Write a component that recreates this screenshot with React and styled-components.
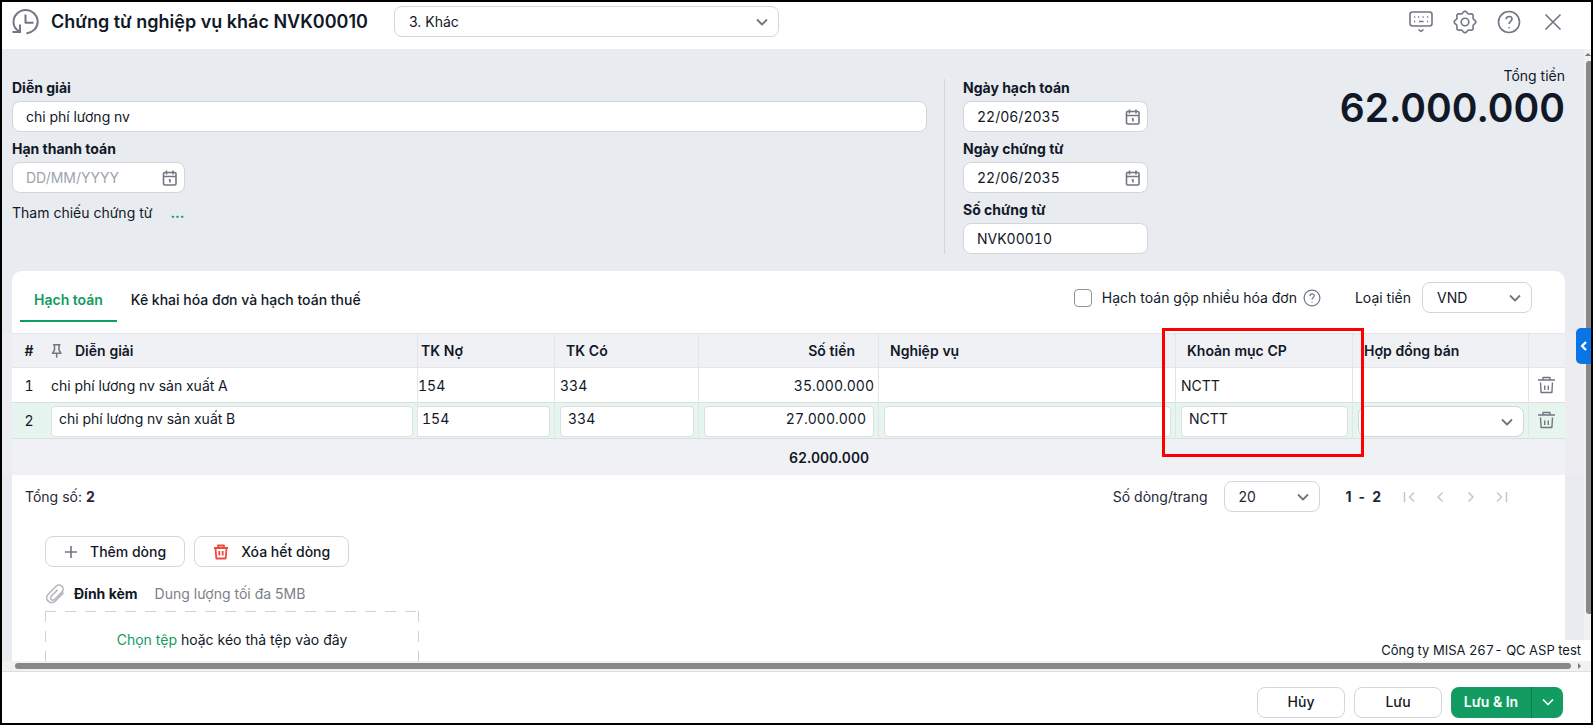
import React, { useState } from 'react';
import styled, { createGlobalStyle } from 'styled-components';

const rows = [
  { id: 1, note: 'chi phí lương nv sản xuất A', debit: '154', credit: '334', amount: '35.000.000', item: 'NCTT' },
  { id: 2, note: 'chi phí lương nv sản xuất B', debit: '154', credit: '334', amount: '27.000.000', item: 'NCTT' },
];

//_______________________ Icons ______________________________

const HistoryIcon = () => (
  <Icon width="28" height="28" viewBox="0 0 28 28" $stroke={2}>
    <path d="M8 16.5V24M0.500 24H9" />
    <path d="M7.500 23.600C3.600 21.400 1.500 17.800 1.500 14 1.500 7.400 7 2 13.600 2S25.700 7.400 25.700 13.800c0 5.800-4.300 10.500-11.300 11.700" />
    <path d="M13.500 6.500v8.200h8" />
  </Icon>
);

const KeyboardIcon = () => (
  <Icon width="24" height="24" viewBox="0 0 24 24" $stroke={1.6}>
    <rect x="1" y="2" width="22" height="14" rx="2.5" />
    <path d="M5 7h1.200M9 7h1.200M13.500 7h1.200M18 7h1.200M5 11.500h1.200M10 11.500h4.500M18 11.500h1.200M9.500 19.500l2.500 2 2.500-2" />
  </Icon>
);

// eight rounded teeth, the radius swings between 8.8 and 10.8
const gearPoints = Array.from({ length: 96 }, (_, i) => {
  const angle = (i / 96) * Math.PI * 2;
  const radius = 9.8 + Math.cos(angle * 8);
  return `${(12 + radius * Math.cos(angle)).toFixed(2)},${(12 + radius * Math.sin(angle)).toFixed(2)}`;
}).join(' ');

const GearIcon = () => (
  <Icon width="24" height="24" viewBox="0 0 24 24" $stroke={1.6}>
    <circle cx="12" cy="12" r="3.800" />
    <polygon points={gearPoints} />
  </Icon>
);

const HelpIcon = ({ size = 24 }) => (
  <Icon width={size} height={size} viewBox="0 0 24 24" $stroke={1.6}>
    <circle cx="12" cy="12" r="10.500" />
    <path d="M9.200 9.300c0-1.700 1.200-2.800 2.900-2.800s2.900 1.100 2.900 2.600c0 2.200-2.900 2.400-2.900 4.900M12.100 17v1.200" />
  </Icon>
);

const CloseIcon = () => (
  <Icon width="24" height="24" viewBox="0 0 24 24" $stroke={1.6}>
    <path d="M4.500 4.500l15 15M19.500 4.500l-15 15" />
  </Icon>
);

const CalendarIcon = () => (
  <Icon width="16" height="16" viewBox="0 0 16 16" $stroke={1.6}>
    <rect x="1.500" y="2.500" width="12.500" height="12.500" rx="1.200" />
    <path d="M4.500 .5v4M11 .5v4M1.500 6.500h12.500M6.800 9.800h1.200v2.800" />
  </Icon>
);

const ChevronDown = () => (
  <Icon width="12" height="12" viewBox="0 0 12 12" $stroke={1.8}>
    <path d="M1 3.500l5 5 5-5" />
  </Icon>
);

const PinIcon = () => (
  <Icon width="12" height="16" viewBox="0 0 12 16" $stroke={1.5}>
    <path d="M2 1.700h7.500M3.500 1.700v5.300L1.500 10.300h8.500L8 7V1.700M5.700 10.300V14.800" />
  </Icon>
);

const TrashIcon = () => (
  <Icon width="18" height="18" viewBox="0 0 18 18" $stroke={1.4}>
    <path d="M0 4h17M5 4V1.500h7V4M2.500 6.500l.6 10h10.800l.6-10M6.700 9.500v4.500M10.300 9.500v4.500" />
  </Icon>
);

const TrashRedIcon = () => (
  <Icon width="16" height="16" viewBox="0 0 16 16" $stroke={1.800} $color="#ef4a41">
    <path d="M1 4h14M5 4V1.500h6V4M2.500 4l.8 10.500h9.400L13.500 4M6.300 7v4.500M9.700 7v4.500" />
  </Icon>
);

const PlusIcon = () => (
  <Icon width="14" height="14" viewBox="0 0 14 14" $stroke={1.6}>
    <path d="M7 1v12M1 7h12" />
  </Icon>
);

const ClipIcon = () => (
  <Icon width="20" height="20" viewBox="0 0 20 20" $stroke={1.6} $color="#b4b7bd">
    <path d="M18.600 8.800l-8.400 8.400a4.900 4.900 0 0 1-7-.1 4.900 4.900 0 0 1 0-6.900l7.900-7.900a4.100 4.100 0 0 1 5.800 5.800l-7.400 7.400a2.300 2.300 0 0 1-3.300-3.300l6.300-6.300" />
  </Icon>
);

const PagerIcon = ({ d }) => (
  <Icon width="12" height="12" viewBox="0 0 12 12" $stroke={1.5} $color="#c3c6cc">
    <path d={d} />
  </Icon>
);

//_______________________ Parts ______________________________

const DateField = ({ id, label, value }) => (
  <Field>
    <Label htmlFor={id}>{label}</Label>
    <InputBox>
      <TextInput id={id} defaultValue={value} placeholder="DD/MM/YYYY" />
      <InputIcon><CalendarIcon /></InputIcon>
    </InputBox>
  </Field>
);

const Dropdown = ({ id, label, options, width }) => (
  <SelectBox $width={width}>
    <Select id={id} aria-label={label}>
      {options.map((option) => <option key={option}>{option}</option>)}
    </Select>
    <SelectArrow><ChevronDown /></SelectArrow>
  </SelectBox>
);

const EditRow = ({ row }) => (
  <EditingRow>
    <Cell $center>{row.id}</Cell>
    <Cell><CellInput aria-label="Diễn giải" defaultValue={row.note} /></Cell>
    <Cell $flush><CellInput $flush aria-label="TK Nợ" defaultValue={row.debit} /></Cell>
    <Cell><CellInput aria-label="TK Có" defaultValue={row.credit} /></Cell>
    <Cell><CellInput $right aria-label="Số tiền" defaultValue={row.amount} /></Cell>
    <Cell><CellInput aria-label="Nghiệp vụ" /></Cell>
    <Cell><CellInput aria-label="Khoản mục CP" defaultValue={row.item} /></Cell>
    <Cell><Dropdown label="Hợp đồng bán" options={['']} /></Cell>
    <Cell $center><IconButton aria-label="Xóa dòng"><TrashIcon /></IconButton></Cell>
  </EditingRow>
);

const ViewRow = ({ row }) => (
  <Row>
    <Cell $center>{row.id}</Cell>
    <Cell>{row.note}</Cell>
    <Cell $flush>{row.debit}</Cell>
    <Cell>{row.credit}</Cell>
    <Cell $right>{row.amount}</Cell>
    <Cell />
    <Cell>{row.item}</Cell>
    <Cell />
    <Cell $center><IconButton aria-label="Xóa dòng"><TrashIcon /></IconButton></Cell>
  </Row>
);

const App = () => {
  const [tab, setTab] = useState('entry');
  const editing = 2;

  return (
    <>
      <GlobalStyle />
      <Window>
        <Header>
          <HistoryIcon />
          <Title>Chứng từ nghiệp vụ khác NVK00010</Title>
          <Dropdown label="Loại chứng từ" options={['3. Khác']} width={385} />
          <HeaderActions>
            <IconButton aria-label="Phím tắt"><KeyboardIcon /></IconButton>
            <IconButton aria-label="Thiết lập"><GearIcon /></IconButton>
            <IconButton aria-label="Trợ giúp"><HelpIcon /></IconButton>
            <IconButton aria-label="Đóng"><CloseIcon /></IconButton>
          </HeaderActions>
        </Header>

        <Body>
          <Content>
            <Summary>
              <MainInfo>
                <Field>
                  <Label htmlFor="note">Diễn giải</Label>
                  <InputBox><TextInput id="note" defaultValue="chi phí lương nv" /></InputBox>
                </Field>
                <DueField>
                  <DateField id="due" label="Hạn thanh toán" />
                </DueField>
                <Reference>Tham chiếu chứng từ <a href="#reference">...</a></Reference>
              </MainInfo>
              <DateInfo>
                <DateField id="posted" label="Ngày hạch toán" value="22/06/2035" />
                <DateField id="issued" label="Ngày chứng từ" value="22/06/2035" />
                <Field>
                  <Label htmlFor="number">Số chứng từ</Label>
                  <InputBox><TextInput id="number" defaultValue="NVK00010" /></InputBox>
                </Field>
              </DateInfo>
              <Total>
                <span>Tổng tiền</span>
                <strong>62.000.000</strong>
              </Total>
            </Summary>

            <Card>
              <TabBar>
                <Tab $active={tab === 'entry'} onClick={() => setTab('entry')}>Hạch toán</Tab>
                <Tab $active={tab === 'tax'} onClick={() => setTab('tax')}>Kê khai hóa đơn và hạch toán thuế</Tab>
                <Options>
                  <CheckLabel>
                    <Checkbox type="checkbox" />
                    Hạch toán gộp nhiều hóa đơn
                  </CheckLabel>
                  <HelpIcon size={18} />
                  <CurrencyLabel htmlFor="currency">Loại tiền</CurrencyLabel>
                  <Dropdown id="currency" label="Loại tiền" options={['VND']} width={110} />
                </Options>
              </TabBar>

              <GridBand>
                <GridArea>
                  <Table>
                    <colgroup>
                      <Col $width={34} />
                      <Col $width={372} />
                      <Col $width={137} />
                      <Col $width={144} />
                      <Col $width={180} />
                      <col />
                      <Col $width={177} />
                      <Col $width={176} />
                      <Col $width={36} />
                    </colgroup>
                    <thead>
                      <tr>
                        <HeadCell $center>#</HeadCell>
                        <HeadCell $pinned><PinHead><PinIcon />Diễn giải</PinHead></HeadCell>
                        <HeadCell $flush>TK Nợ</HeadCell>
                        <HeadCell>TK Có</HeadCell>
                        <HeadCell $right>Số tiền</HeadCell>
                        <HeadCell>Nghiệp vụ</HeadCell>
                        <HeadCell>Khoản mục CP</HeadCell>
                        <HeadCell>Hợp đồng bán</HeadCell>
                        <HeadCell />
                      </tr>
                    </thead>
                    <tbody>
                      {rows.map((row) => (
                        row.id === editing
                          ? <EditRow key={row.id} row={row} />
                          : <ViewRow key={row.id} row={row} />
                      ))}
                    </tbody>
                    <tfoot>
                      <tr>
                        <FootCell colSpan="5">62.000.000</FootCell>
                        <FootCell colSpan="4" />
                      </tr>
                    </tfoot>
                  </Table>
                  <Highlight />
                </GridArea>
              </GridBand>

              <Pager>
                <span>Tổng số: <b>2</b></span>
                <PagerControls>
                  <label htmlFor="page-size">Số dòng/trang</label>
                  <Dropdown id="page-size" label="Số dòng/trang" options={['20']} width={96} />
                  <PageRange>
                    <span>1</span>
                    <span>-</span>
                    <span>2</span>
                  </PageRange>
                  <PagerNav>
                    <IconButton aria-label="Trang đầu"><PagerIcon d="M1.500 1v10M11 1.500L6.500 6l4.500 4.500" /></IconButton>
                    <IconButton aria-label="Trang trước"><PagerIcon d="M8.500 1.500L4 6l4.500 4.500" /></IconButton>
                    <IconButton aria-label="Trang sau"><PagerIcon d="M3.500 1.500L8 6l-4.500 4.500" /></IconButton>
                    <IconButton aria-label="Trang cuối"><PagerIcon d="M1 1.500L5.500 6 1 10.500M10.500 1v10" /></IconButton>
                  </PagerNav>
                </PagerControls>
              </Pager>

              <CardFoot>
                <RowActions>
                  <Button $wide><PlusIcon />Thêm dòng</Button>
                  <Button $wide><TrashRedIcon />Xóa hết dòng</Button>
                </RowActions>
                <Attach>
                  <ClipIcon />
                  <b>Đính kèm</b>
                  <span>Dung lượng tối đa 5MB</span>
                </Attach>
                <DropZone><span><a href="#file">Chọn tệp</a> hoặc kéo thả tệp vào đây</span></DropZone>
              </CardFoot>
            </Card>
          </Content>
          <VerticalBar>
            <BarArrow $up />
            <VerticalThumb />
          </VerticalBar>
          <Company>Công ty MISA 267- QC ASP test</Company>
          <SideTab aria-label="Mở rộng">
            <Icon width="7" height="12" viewBox="0 0 7 12" $stroke={2.400} $color="#fff"><path d="M6 2L2 6l4 4" /></Icon>
          </SideTab>
        </Body>

        <HorizontalBar>
          <HorizontalThumb />
          <BarArrow />
        </HorizontalBar>

        <Footer>
          <Button>Hủy</Button>
          <Button>Lưu</Button>
          <SplitButton>
            <SaveButton>Lưu &amp; In</SaveButton>
            <SaveMenu aria-label="Thêm lựa chọn">
              <Icon width="12" height="12" viewBox="0 0 12 12" $stroke={1.700} $color="#fff"><path d="M1 3.500l5 5 5-5" /></Icon>
            </SaveMenu>
          </SplitButton>
        </Footer>
      </Window>
    </>
  );
};

//_______________________ Styles ______________________________

const GlobalStyle = createGlobalStyle`
  * {
    box-sizing: border-box;
  }

  body {
    margin: 0;
    background: #fff;
    color: #111827;
    font-family: Inter, "Liberation Sans", sans-serif;
    font-size: 14px;
    line-height: 18px;
  }

  button, input, select {
    font: inherit;
    color: inherit;
  }

  a {
    color: #119c60;
    text-decoration: none;
  }

  b {
    font-weight: 700;
  }
`;

const Icon = styled.svg`
  display: block;
  flex: none;
  fill: none;
  stroke: ${({ $color }) => $color || '#717682'};
  stroke-width: ${({ $stroke }) => $stroke};
  stroke-linejoin: round;
`;

const Window = styled.div`
  display: flex;
  flex-direction: column;
  height: 100vh;
  border: 2px solid #000;
  background: #fff;
`;

const Header = styled.header`
  display: flex;
  align-items: center;
  flex: none;
  height: 47px;
  padding: 0 26px 8px 10px;
`;

const Title = styled.h1`
  margin: 0 26px 0 11px;
  font-size: 18px;
  font-weight: 600;
  line-height: 24px;
  white-space: nowrap;
`;

const HeaderActions = styled.div`
  display: flex;
  gap: 20px;
  margin-left: auto;
`;

const IconButton = styled.button`
  display: inline-flex;
  padding: 0;
  border: 0;
  background: none;
  cursor: pointer;
`;

const Body = styled.main`
  position: relative;
  display: flex;
  flex: 1;
  min-height: 0;
  overflow: hidden;
  background: #e8ebf0;
`;

const Content = styled.div`
  flex: 1;
  min-width: 0;
  padding: 30px 19px 0 10px;
`;

const Summary = styled.section`
  display: flex;
`;

const MainInfo = styled.div`
  display: flex;
  flex-direction: column;
  gap: 8px;
  flex: 0 1 915px;
`;

const DueField = styled.div`
  width: 173px;
`;

const Reference = styled.div`
  padding-top: 3px;

  a {
    margin-left: 14px;
    font-weight: 700;
  }
`;

const DateInfo = styled.div`
  display: flex;
  flex-direction: column;
  gap: 8px;
  flex: none;
  width: 204px;
  margin-left: 17px;
  padding-left: 18px;
  border-left: 1px solid #d2d5da;
`;

const Total = styled.div`
  display: flex;
  flex-direction: column;
  align-items: flex-end;
  margin: -12px 0 0 auto;

  strong {
    font-size: 39px;
    font-weight: 600;
    line-height: 46px;
  }
`;

const Field = styled.div`
  display: flex;
  flex-direction: column;
  gap: 4px;
`;

const Label = styled.label`
  font-weight: 700;
`;

const InputBox = styled.div`
  display: flex;
  align-items: center;
  height: 31px;
  padding: 0 6px 0 13px;
  border: 1px solid #d2d5da;
  border-radius: 8px;
  background: #fff;
`;

const TextInput = styled.input`
  flex: 1;
  min-width: 0;
  padding: 0;
  border: 0;
  outline: 0;
  background: none;
  font-variant-numeric: tabular-nums;

  &::placeholder {
    color: #a0a3ab;
  }
`;

const InputIcon = styled.span`
  flex: none;
`;

const SelectBox = styled.div`
  position: relative;
  flex: 0 1 auto;
  width: ${({ $width }) => ($width ? `${$width}px` : '100%')};
`;

const Select = styled.select`
  display: block;
  width: 100%;
  height: 31px;
  padding: 0 30px 0 14px;
  border: 1px solid #d2d5da;
  border-radius: 8px;
  background: #fff;
  appearance: none;
`;

const SelectArrow = styled.span`
  position: absolute;
  top: 10px;
  right: 11px;
  pointer-events: none;
`;

const Card = styled.section`
  margin-top: 17px;
  border-radius: 10px 10px 0 0;
  background: #fff;
`;

const TabBar = styled.div`
  display: flex;
  align-items: flex-start;
  height: 62px;
  padding: 7px 33px 0 8px;
`;

const Tab = styled.button`
  height: 44px;
  padding: 2px 14px 0;
  border: 0;
  border-bottom: 2px solid ${({ $active }) => ($active ? '#119c60' : 'transparent')};
  background: none;
  color: ${({ $active }) => ($active ? '#119c60' : '#111827')};
  font-weight: ${({ $active }) => ($active ? 600 : 500)};
  cursor: pointer;
`;

const Options = styled.div`
  display: flex;
  align-items: center;
  gap: 6px;
  margin: 4px 0 0 auto;
`;

const CheckLabel = styled.label`
  display: flex;
  align-items: center;
  gap: 10px;
`;

const Checkbox = styled.input`
  width: 18px;
  height: 18px;
  margin: 0;
  border: 1px solid #8d929c;
  border-radius: 4px;
  background: #fff;
  appearance: none;

  &:checked {
    background: #119c60;
  }
`;

const CurrencyLabel = styled.label`
  margin: 0 5px 0 28px;
`;

const GridBand = styled.div`
  margin: 0 -19px 0 -10px;
  padding: 0 19px 0 10px;
  background: #ececf1;
`;

const GridArea = styled.div`
  position: relative;
`;

const Table = styled.table`
  width: 100%;
  table-layout: fixed;
  border-spacing: 0;
  background: #fff;
  font-variant-numeric: tabular-nums;
`;

const Col = styled.col`
  width: ${({ $width }) => $width}px;
`;

const HeadCell = styled.th`
  height: 35px;
  padding: 0 ${({ $right, $center }) => ($right ? 23 : $center ? 0 : 11)}px 0
    ${({ $pinned, $flush, $center }) => ($center ? 0 : $pinned ? 5 : $flush ? 3 : 11)}px;
  border-top: 1px solid #e3e5e8;
  border-bottom: 1px solid #e3e5e8;
  border-right: 1px solid #e3e5e8;
  background: #f0f1f5;
  font-weight: 600;
  text-align: ${({ $right, $center }) => ($right ? 'right' : $center ? 'center' : 'left')};

  &:first-child, &:last-child {
    border-right: 0;
  }
`;

const PinHead = styled.span`
  display: flex;
  align-items: center;
  gap: 12px;
`;

const Cell = styled.td`
  height: 35px;
  padding: 1px ${({ $center }) => ($center ? 0 : 4)}px 0 ${({ $center, $flush }) => ($center || $flush ? 0 : 5)}px;
  border-bottom: 1px solid #dcdee1;
  border-right: 1px solid #e3e5e8;
  text-align: ${({ $right, $center }) => ($right ? 'right' : $center ? 'center' : 'left')};

  &:first-child, &:last-child {
    border-right: 0;
  }

  &:last-child {
    padding-bottom: 3px;
  }

  ${IconButton} {
    vertical-align: middle;
  }
`;

const Row = styled.tr``;

const EditingRow = styled(Row)`
  background: #e7f5ef;

  ${Cell} {
    height: 36px;
  }
`;

const CellInput = styled.input`
  display: block;
  width: 100%;
  height: 31px;
  padding: 0 7px 5px ${({ $flush }) => ($flush ? 4 : 7)}px;
  border: 1px solid #dddfe2;
  border-left-width: ${({ $flush }) => ($flush ? 0 : 1)}px;
  border-radius: ${({ $flush }) => ($flush ? '0 4px 4px 0' : '4px')};
  background: #fff;
  font-variant-numeric: tabular-nums;
  text-align: ${({ $right }) => ($right ? 'right' : 'left')};
`;

const FootCell = styled.td`
  height: 36px;
  padding: 2px 10px 0;
  background: #f0f1f5;
  font-weight: 600;
  text-align: right;
`;

const Highlight = styled.div`
  position: absolute;
  top: -5px;
  right: 201px;
  width: 202px;
  height: 129px;
  border: 3px solid #f00;
  pointer-events: none;
`;

const Pager = styled.div`
  display: flex;
  align-items: center;
  justify-content: space-between;
  height: 43px;
  padding: 0 57px 0 13px;
  color: #1f2937;
`;

const PagerControls = styled.div`
  display: flex;
  align-items: center;
  gap: 16px;
`;

const PageRange = styled.b`
  display: flex;
  gap: 7px;
  margin: 0 6px 0 10px;
`;

const PagerNav = styled.div`
  display: flex;
  gap: 19px;
`;

const CardFoot = styled.div`
  padding: 18px 33px 24px;
`;

const RowActions = styled.div`
  display: flex;
  gap: 9px;
`;

const Button = styled.button`
  display: flex;
  align-items: center;
  justify-content: center;
  gap: 12px;
  min-width: 88px;
  height: 31px;
  padding: 0 ${({ $wide }) => ($wide ? 18 : 12)}px;
  border: 1px solid #d2d5da;
  border-radius: 8px;
  background: #fff;
  font-weight: 500;
  white-space: nowrap;
  cursor: pointer;
`;

const Attach = styled.div`
  display: flex;
  align-items: center;
  gap: 9px;
  height: 20px;
  margin: 17px 0 7px;

  span {
    margin-left: 8px;
    color: #7b7f88;
  }
`;

const DropZone = styled.div`
  --dash: #cfd2d6 0 11px, transparent 11px 20px;
  display: flex;
  align-items: center;
  justify-content: center;
  width: 374px;
  height: 58px;
  background:
    repeating-linear-gradient(90deg, var(--dash)) top / 100% 1px no-repeat,
    repeating-linear-gradient(var(--dash)) left / 1px 100% no-repeat,
    repeating-linear-gradient(var(--dash)) right / 1px 100% no-repeat;
`;

const VerticalBar = styled.div`
  display: flex;
  flex-direction: column;
  align-items: flex-end;
  width: 7px;
  padding: 4px 0 47px;
  background: #f1f1f1;
`;

const BarArrow = styled.i`
  flex: none;
  border: 3px solid transparent;
  ${({ $up }) => ($up ? 'border-bottom-color: #777; border-top-width: 0;' : 'border-left-color: #777; border-right-width: 0;')}
`;

const VerticalThumb = styled.div`
  flex: 1;
  width: 5px;
  margin-top: 5px;
  border-radius: 3px 0 0 3px;
  background: #888;
`;

const HorizontalBar = styled.div`
  display: flex;
  align-items: center;
  gap: 7px;
  flex: none;
  height: 11px;
  padding: 0 10px 0 13px;
  border-bottom: 1px solid #dcdee1;
  background: #f1f1f1;
`;

const HorizontalThumb = styled.div`
  flex: 1;
  height: 6px;
  border-radius: 3px;
  background: #888;
`;

const Company = styled.div`
  position: absolute;
  right: 0;
  bottom: 0;
  padding: 1px 10px 2px;
  background: #fff;
  font-size: 13px;
  font-variant-numeric: tabular-nums;
`;

const SideTab = styled.button`
  position: absolute;
  top: 279px;
  right: 0;
  display: flex;
  align-items: center;
  justify-content: center;
  width: 15px;
  height: 36px;
  padding: 0;
  border: 0;
  border-radius: 5px 0 0 5px;
  background: #0a74e6;
  cursor: pointer;
`;

const Footer = styled.footer`
  display: flex;
  gap: 9px;
  justify-content: flex-end;
  align-items: center;
  flex: none;
  height: 51px;
  padding: 9px 28px 0 0;
`;

const SplitButton = styled.div`
  display: flex;
  height: 31px;
  border-radius: 8px;
  overflow: hidden;
`;

const SaveButton = styled.button`
  width: 80px;
  padding: 0;
  border: 0;
  background: #139c62;
  color: #fff;
  font-weight: 600;
  cursor: pointer;
`;

const SaveMenu = styled.button`
  display: flex;
  align-items: center;
  justify-content: center;
  width: 32px;
  padding: 0;
  border: 0;
  border-left: 1px solid #0b7d4c;
  background: #139c62;
  cursor: pointer;
`;

export default App;
